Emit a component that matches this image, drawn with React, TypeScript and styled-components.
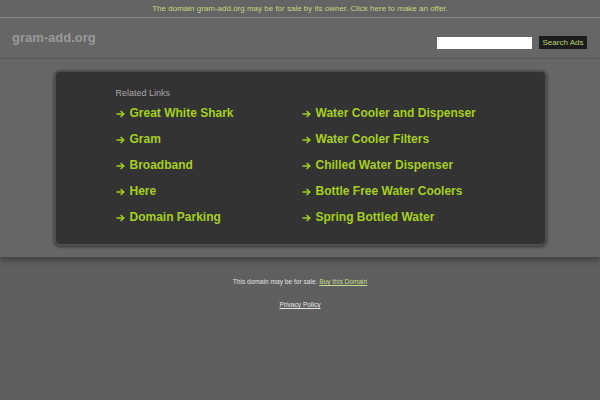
import styled, { createGlobalStyle } from 'styled-components';

const GlobalStyle = createGlobalStyle`
  html, body {
    margin: 0;
    padding: 0;
    background: #5f5f5f;
    font-family: 'Liberation Sans', Arial, sans-serif;
  }
`;

const TopBar = styled.div`
  height: 17px;
  background: #646464;
  border-bottom: 1px solid #8c8c8c;
  color: #c2d77c;
  font-size: 8px;
  line-height: 17px;
  text-align: center;
`;

const Header = styled.header`
  height: 40px;
  background: #666;
  border-bottom: 1px solid #585858;
  display: flex;
  align-items: center;
  justify-content: space-between;
  padding: 0 13px 0 12px;
`;

const Logo = styled.div`
  color: #9a9a9a;
  font-size: 13px;
  font-weight: bold;
  margin-top: -1px;
`;

const SearchForm = styled.form`
  display: flex;
  align-items: center;
  gap: 7px;
  margin-top: 9px;
`;

const SearchInput = styled.input`
  width: 95px;
  height: 12px;
  box-sizing: border-box;
  border: 0;
  padding: 0;
  background: #fff;
`;

const SearchButton = styled.button`
  width: 48px;
  height: 13px;
  padding: 0;
  border: 0;
  background: #1c1c1c;
  color: #b9d46e;
  font-family: 'Liberation Sans', Arial, sans-serif;
  font-size: 8px;
`;

const Main = styled.main`
  background: #666;
  padding: 11px 0 11px;
  box-shadow: 0 4px 6px rgba(0, 0, 0, 0.3);
  position: relative;
`;

const Panel = styled.section`
  width: 493px;
  height: 176px;
  box-sizing: border-box;
  margin: 0 auto;
  background: #333;
  border: 2px solid #4f4f4f;
  border-radius: 6px;
  box-shadow: 0 1px 3px rgba(0, 0, 0, 0.5);
  padding: 15px 0 0 60px;
`;

const Heading = styled.div`
  color: #a8a8a8;
  font-size: 9px;
  line-height: 12px;
`;

const LinkGrid = styled.div`
  display: grid;
  grid-template-columns: 186px 186px;
  grid-auto-rows: 26px;
  margin-top: 1px;
`;

const LinkItem = styled.a`
  display: flex;
  align-items: center;
  gap: 5px;
  color: #a5d01d;
  font-size: 12px;
  font-weight: bold;
  text-decoration: none;
  white-space: nowrap;
`;

const ArrowIcon = styled.svg`
  width: 9px;
  height: 8px;
  flex: none;
  margin-top: 1px;
`;

const Arrow = () => (
  <ArrowIcon viewBox="0 0 9 8" fill="none" stroke="currentColor" strokeWidth="1.5">
    <path d="M0.5 4H7.8" />
    <path d="M4.6 1L7.8 4L4.6 7" strokeLinejoin="miter" />
  </ArrowIcon>
);

const Footer = styled.footer`
  text-align: center;
  color: #e0e0e0;
  font-size: 6.6px;
  padding-top: 20px;
`;

const FootLine = styled.p<{ $gap: number }>`
  margin: 0 0 ${(p) => p.$gap}px;
  line-height: 9px;
`;

const FootLink = styled.a`
  color: #c5dd8a;
  text-decoration: underline;
`;

const PrivacyLink = styled.a`
  color: #e6e6e6;
  text-decoration: underline;
`;

const left = ['Great White Shark', 'Gram', 'Broadband', 'Here', 'Domain Parking'];
const right = [
  'Water Cooler and Dispenser',
  'Water Cooler Filters',
  'Chilled Water Dispenser',
  'Bottle Free Water Coolers',
  'Spring Bottled Water',
];

const App = () => {
  const rows = left.flatMap((l, i) => [l, right[i]]);
  return (
    <>
      <GlobalStyle />
      <TopBar>The domain gram-add.org may be for sale by its owner. Click here to make an offer.</TopBar>
      <Header>
        <Logo>gram-add.org</Logo>
        <SearchForm onSubmit={(e) => e.preventDefault()}>
          <SearchInput type="text" />
          <SearchButton type="submit">Search Ads</SearchButton>
        </SearchForm>
      </Header>
      <Main>
        <Panel>
          <Heading>Related Links</Heading>
          <LinkGrid>
            {rows.map((t) => (
              <LinkItem href="#" key={t}>
                <Arrow />
                {t}
              </LinkItem>
            ))}
          </LinkGrid>
        </Panel>
      </Main>
      <Footer>
        <FootLine $gap={14}>
          This domain may be for sale. <FootLink href="#">Buy this Domain</FootLink>
        </FootLine>
        <FootLine $gap={0}>
          <PrivacyLink href="#">Privacy Policy</PrivacyLink>
        </FootLine>
      </Footer>
    </>
  );
};

export default App;
